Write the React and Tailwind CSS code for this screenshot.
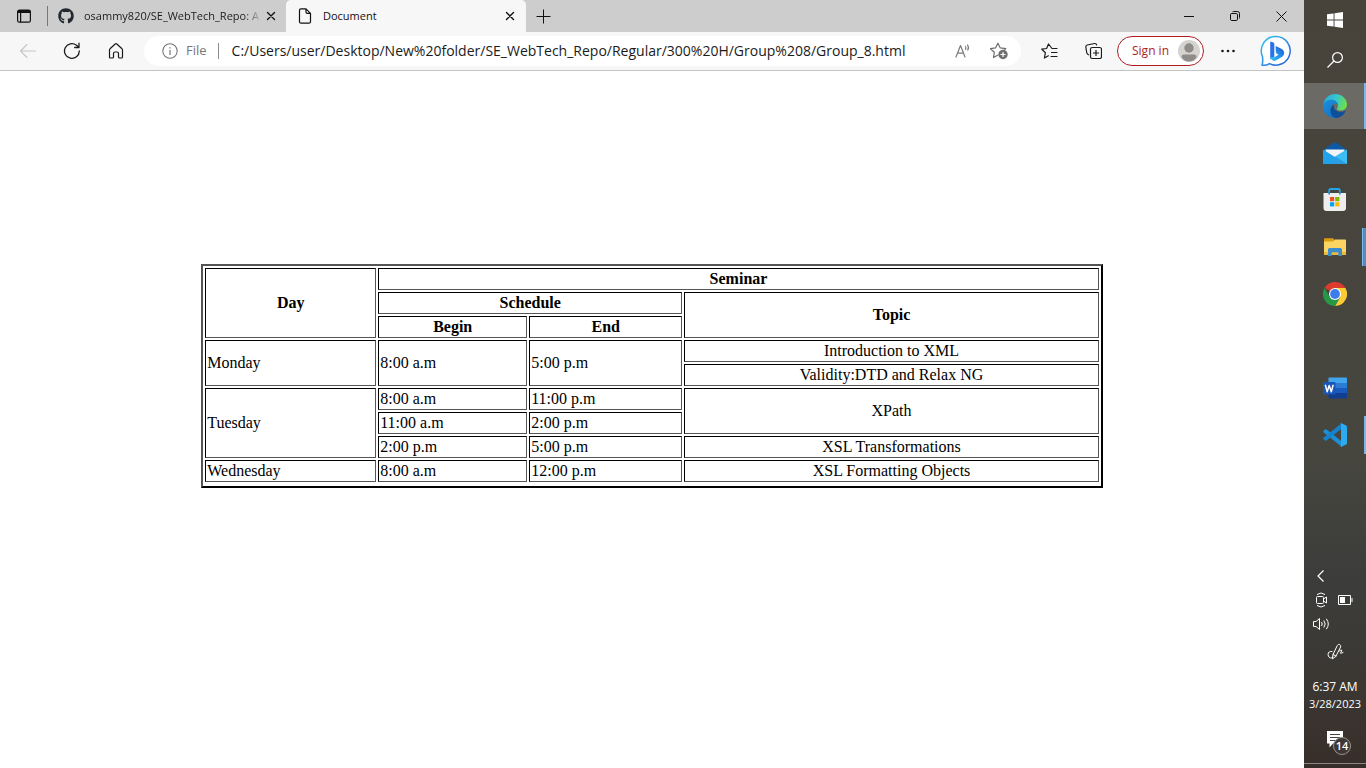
import React from "react";
import { FaGithub } from "react-icons/fa";

const UI = "font-['Open_Sans','Noto_Sans',sans-serif]";

function Svg({ w = 24, h = 24, children, ...rest }) {
  return (
    <svg width={w} height={h} viewBox={`0 0 ${w} ${h}`} fill="none" aria-hidden="true" className="shrink-0" {...rest}>
      {children}
    </svg>
  );
}

const line = { stroke: "currentColor", strokeLinecap: "round", strokeLinejoin: "round" };

function CloseIcon() {
  return (
    <Svg w={10} h={10}>
      <path {...line} strokeWidth="1.4" d="M1.5 1.5l7 7M8.5 1.5l-7 7" />
    </Svg>
  );
}

function TabBar() {
  return (
    <header className="flex h-8 bg-[#cdcdcd] text-[#111]">
      <button aria-label="Tab actions" className="flex w-[47px] items-center justify-center">
        <Svg w={16} h={16}>
          <rect x="1.6" y="2.2" width="12.8" height="12" rx="1.8" {...line} strokeWidth="1.2" />
          <path d="M1.5 5V3.5Q1.500 2 3 2h10q1.500 0 1.500 1.500V5z" fill="currentColor" />
          <path {...line} strokeWidth="1.2" d="M4.600 5v9" />
        </Svg>
      </button>
      <div className="my-1.5 w-px bg-[#777]" />
      <div className="flex w-[238px] items-center pl-2.5 pr-2.5">
        <FaGithub className="size-4 shrink-0 text-[#24292f]" />
        <span className="ml-2.5 min-w-0 flex-1 overflow-hidden whitespace-nowrap bg-gradient-to-r from-[#1b1b1b] from-90% to-transparent bg-clip-text text-[11px] text-transparent">
          osammy820/SE_WebTech_Repo: A
        </span>
        <button aria-label="Close osammy820 tab" className="ml-1">
          <CloseIcon />
        </button>
      </div>
      <div className="flex w-[240px] items-center rounded-t-[5px] bg-[#f7f7f7] pl-3 pr-[11px]">
        <Svg w={14} h={16}>
          <path {...line} strokeWidth="1.2" d="M8 .8H3Q1.500 .8 1.500 2.300v11.400q0 1.500 1.500 1.500h8q1.500 0 1.500-1.500V5.300zV4q0 1.300 1.300 1.300h3.200" />
        </Svg>
        <span className="ml-[11px] flex-1 text-[11px]">Document</span>
        <button aria-label="Close Document tab">
          <CloseIcon />
        </button>
      </div>
      <button aria-label="New tab" className="ml-2.5 flex items-center">
        <Svg w={15} h={15}>
          <path stroke="currentColor" d="M7.500 .5v14M.5 7.500h14" />
        </Svg>
      </button>
      <div className="ml-auto flex">
        <button aria-label="Minimize" className="flex w-[46px] items-center justify-center">
          <Svg w={10} h={10}>
            <path stroke="currentColor" d="M0 5.500h10" />
          </Svg>
        </button>
        <button aria-label="Restore" className="flex w-[46px] items-center justify-center">
          <Svg w={10} h={10}>
            <rect x=".5" y="2.500" width="7" height="7" rx="1.300" stroke="currentColor" />
            <path stroke="currentColor" d="M2.500 .8Q2.800 .5 3.500 .5H7.500Q9.500 .5 9.500 2.500V6.500Q9.500 7.200 9.200 7.500" />
          </Svg>
        </button>
        <button aria-label="Close window" className="flex w-[46px] items-center justify-center">
          <Svg w={11} h={11}>
            <path stroke="currentColor" d="M.5 .5l10 10M10.500 .5l-10 10" />
          </Svg>
        </button>
      </div>
    </header>
  );
}

function BingLogo() {
  return (
    <Svg w={32} h={32}>
      <defs>
        <linearGradient id="bingRing" x1="0" y1="0" x2="1" y2="1">
          <stop offset="0" stopColor="#35c8ee" />
          <stop offset="1" stopColor="#2456d8" />
        </linearGradient>
        <linearGradient id="bingLetter" x1="1" y1="0" x2="0" y2="1">
          <stop offset="0" stopColor="#1b50d0" />
          <stop offset="0.500" stopColor="#2592ec" />
          <stop offset="1" stopColor="#3ac6f2" />
        </linearGradient>
      </defs>
      <path d="M16 1.500A14.300 14.300 0 1 1 9.500 28.600Q7 30.500 2 30.300Q3.200 27 2.500 21.500A14.300 14.300 0 0 1 16 1.500z" fill="#fff" stroke="url(#bingRing)" strokeWidth="1.500" strokeLinejoin="round" />
      <path d="M10.200 6.500l3.200 1.100q.9 .4 .9 1.400v13l-4.100 2z" fill="#2a72ea" />
      <path d="M15.500 11.500q.3-.6 1.300-.1l5 2.600q2.400 1.300 2.400 4 0 2.300-2 3.700l-6.400 3.800q-1.500 .8-3 .1-2.600-1.300-2.600-3.600l4.100 .2 4.200-2.500-1.800-1.200q-.6-.5-.8-1.200z" fill="url(#bingLetter)" />
    </Svg>
  );
}

function Toolbar() {
  return (
    <div className="flex h-[39px] items-center border-b border-[#c4c4c4] bg-[#f7f7f7] pl-[18px] pr-3 text-[#1b1b1b]">
      <button aria-label="Back" disabled className="flex w-5 justify-center text-[#c6c6c6]">
        <Svg w={18} h={18}>
          <path {...line} strokeWidth="1.1" d="M16.500 9H1.500M8 2.500L1.500 9 8 15.500" />
        </Svg>
      </button>
      <button aria-label="Refresh" className="ml-6 flex w-5 justify-center">
        <Svg w={18} h={18}>
          <path {...line} strokeWidth="1.300" d="M16.300 9A7.400 7.400 0 1 1 13.500 3.200L15.800 5.300M16 1.200v4.300h-4.300" />
        </Svg>
      </button>
      <button aria-label="Home" className="ml-6 flex w-5 justify-center">
        <Svg w={18} h={18}>
          <path {...line} strokeWidth="1.200" d="M2.500 8Q2.500 7.300 3 6.800L8.200 2q.8-.7 1.600 0L15 6.800q.5.5.5 1.200v7q0 1-1 1h-2q-1 0-1-1v-3.500q0-1.500-1.500-1.500H8Q6.500 10 6.500 11.500V15q0 1-1 1h-2q-1 0-1-1z" />
        </Svg>
      </button>
      <div className="ml-[18px] flex h-[30px] min-w-0 flex-1 items-center rounded-full bg-white pl-[18px] pr-3">
        <Svg w={16} h={16} className="shrink-0 text-[#767676]">
          <circle cx="8" cy="8" r="7.200" stroke="currentColor" strokeWidth="1.100" />
          <path stroke="currentColor" strokeWidth="1.200" d="M8 7v5M8 4.200v1.400" />
        </Svg>
        <span className="ml-2 text-[13px] text-[#767676]">File</span>
        <div className="ml-[11px] h-4 w-px bg-[#8a8a8a]" />
        <input
          aria-label="Address"
          readOnly
          value="C:/Users/user/Desktop/New%20folder/SE_WebTech_Repo/Regular/300%20H/Group%208/Group_8.html"
          className="ml-[13px] min-w-0 flex-1 bg-transparent text-sm text-[#1b1b1b] outline-none"
        />
        <button aria-label="Read aloud" className="ml-2 text-[#7b7b7b]">
          <Svg w={18} h={18}>
            <path {...line} strokeWidth="1.200" d="M1 15L5.500 3.500 10 15M2.700 11.200h5.700M10.500 4.500q1 1.300 0 2.800M12.500 3q1.800 2.300 .3 5" />
          </Svg>
        </button>
        <button aria-label="Add to favorites" className="ml-4 text-[#6e6e6e]">
          <Svg w={20} h={20}>
            <path {...line} strokeWidth="1.200" d="M8.500 14.200L4.500 16.500l.8-5.200L1.500 7.700l5-.8L8.900 2.200l2.400 4.700 5.500 .8-2 2" />
            <circle cx="14" cy="13.500" r="4.700" fill="currentColor" />
            <path stroke="#fff" strokeWidth="1.200" d="M14 11v5M11.500 13.500h5" />
          </Svg>
        </button>
      </div>
      <button aria-label="Favorites" className="ml-5 flex w-4">
        <Svg w={17} h={18}>
          <path {...line} strokeWidth="1.200" d="M16 6.500h-5L7.500 2 5.600 6.500 .8 7.200l3.600 3.500-1 5.300 4-2.200M10.500 10.500H16M10 14.500h6" />
        </Svg>
      </button>
      <button aria-label="Collections" className="ml-7 flex w-4">
        <Svg w={17} h={18}>
          <path {...line} strokeWidth="1.200" d="M3.500 12.700Q2 12.200 1.700 10.500L.8 5Q.7 3.400 2.200 3L9.500 1.500q1.700-.2 2.200 1.500" />
          <rect x="5.500" y="5.500" width="11" height="11" rx="1.800" {...line} strokeWidth="1.200" />
          <path stroke="currentColor" strokeWidth="1.200" d="M11 8v6M8 11h6" />
        </Svg>
      </button>
      <button className="ml-4 flex h-[30px] w-[87px] items-center justify-between rounded-full border border-[#b01e22] bg-white pl-3.5 pr-[3px] text-xs text-[#b01e22]">
        Sign in
        <Svg w={22} h={22}>
          <circle cx="11" cy="11" r="11" fill="#d5d3d1" />
          <circle cx="11" cy="8" r="4.700" fill="#8e8b89" />
          <path d="M3.500 17q0-2.500 2.500-2.500h10q2.500 0 2.500 2.500-2.500 4.500-7.500 4.500T3.500 17z" fill="#8e8b89" />
        </Svg>
      </button>
      <button aria-label="Settings and more" className="ml-4 flex w-4 justify-center">
        <Svg w={16} h={4}>
          <circle cx="2.500" cy="2" r="1.300" fill="currentColor" />
          <circle cx="8" cy="2" r="1.300" fill="currentColor" />
          <circle cx="13.500" cy="2" r="1.300" fill="currentColor" />
        </Svg>
      </button>
      <button aria-label="Bing" className="ml-6">
        <BingLogo />
      </button>
    </div>
  );
}

const cell = "border border-b-[#555] border-l-black border-r-[#555] border-t-black p-px";

function Schedule() {
  return (
    <table className="mx-auto w-[70%] table-fixed border-separate border-spacing-0.5 border-2 border-b-black border-l-[#555] border-r-black border-t-[#555] pb-0.5 text-left text-base/[18px]">
      <colgroup>
        <col className="w-[171px]" />
        <col className="w-[149px]" />
        <col className="w-[153px]" />
        <col />
      </colgroup>
      <thead className="text-center">
        <tr>
          <th rowSpan={3} className={cell}>Day</th>
          <th colSpan={3} className={cell}>Seminar</th>
        </tr>
        <tr>
          <th colSpan={2} className={cell}>Schedule</th>
          <th rowSpan={2} className={cell}>Topic</th>
        </tr>
        <tr>
          <th className={cell}>Begin</th>
          <th className={cell}>End</th>
        </tr>
      </thead>
      <tbody>
        <tr>
          <td rowSpan={2} className={cell}>Monday</td>
          <td rowSpan={2} className={cell}>8:00 a.m</td>
          <td rowSpan={2} className={cell}>5:00 p.m</td>
          <td className={`${cell} text-center`}>Introduction to XML</td>
        </tr>
        <tr>
          <td className={`${cell} text-center`}>Validity:DTD and Relax NG</td>
        </tr>
        <tr>
          <td rowSpan={3} className={cell}>Tuesday</td>
          <td className={cell}>8:00 a.m</td>
          <td className={cell}>11:00 p.m</td>
          <td rowSpan={2} className={`${cell} text-center`}>XPath</td>
        </tr>
        <tr>
          <td className={cell}>11:00 a.m</td>
          <td className={cell}>2:00 p.m</td>
        </tr>
        <tr>
          <td className={cell}>2:00 p.m</td>
          <td className={cell}>5:00 p.m</td>
          <td className={`${cell} text-center`}>XSL Transformations</td>
        </tr>
        <tr>
          <td className={cell}>Wednesday</td>
          <td className={cell}>8:00 a.m</td>
          <td className={cell}>12:00 p.m</td>
          <td className={`${cell} text-center`}>XSL Formatting Objects</td>
        </tr>
      </tbody>
    </table>
  );
}

function EdgeLogo() {
  return (
    <Svg w={24} h={24}>
      <defs>
        <linearGradient id="edgeTop" x1="0" y1="0.200" x2="1" y2="0.500">
          <stop offset="0" stopColor="#2aa9e0" />
          <stop offset="0.500" stopColor="#35c5cf" />
          <stop offset="1" stopColor="#6be04b" />
        </linearGradient>
        <linearGradient id="edgeLeft" x1="0" y1="0" x2="0.500" y2="1">
          <stop offset="0" stopColor="#1c8fd8" />
          <stop offset="1" stopColor="#1276cc" />
        </linearGradient>
      </defs>
      <path d="M.3 10.500C1.200 4.200 6 0 12 0c7 0 12 5 12 10.500 0 3.800-2.900 6-6 6-2.500 0-4.200-.6-4.200-1.500 0-.6 1.200-1.200 1.200-3.200C15 9 12.500 6.800 9 6.800 4.500 6.800 1 9 .3 10.500z" fill="url(#edgeTop)" />
      <path d="M0 12C.3 8.500 4 5.800 8.500 5.800c4 0 6.500 2.500 6.500 5.500-1-1.300-3-2-4.500-1-3.500 2-3.700 7.500-.5 10.800 1.500 1.500 3 2.300 4.500 2.600A12 12 0 0 1 0 12z" fill="url(#edgeLeft)" />
      <path d="M11 10.500c-.8 2.500 .3 5.500 3.200 6.700 2.400 1 5.300 .8 7.500-.3 .6-.3 1 .2 .7 .8C20.500 21.500 16.500 24 12.800 24 7.500 23 5 14 11 10.500z" fill="#0f4f9a" />
    </Svg>
  );
}

function MailLogo() {
  return (
    <Svg w={24} h={24}>
      <path d="M0 9L12 1l12 8v3H0z" fill="#0a5aa8" />
      <path d="M2.500 8.500h19v3L12 17l-9.500-5.500z" fill="#f1f3f5" />
      <path d="M0 8.500L12 16l12-7.500V23H0z" fill="#22a2ea" />
      <path d="M24 8.500V23L12 15.500z" fill="#3cbdf5" />
      <path d="M12 15.500L24 23H8z" fill="#2b9fe4" />
    </Svg>
  );
}

function StoreLogo() {
  return (
    <Svg w={24} h={24}>
      <path d="M6.200 6V2.500Q6.200 1 7.700 1h7.600q1.500 0 1.500 1.500V6" stroke="#22a5ea" strokeWidth="1.800" />
      <path d="M.5 5h22.500v15q0 3-3 3H3.500q-3 0-3-3z" fill="#eeeeef" />
      <path d="M6.200 6.500V4M16.800 6.500V4" stroke="#1686cf" strokeWidth="1.600" />
      <path d="M7 9h4.200v4.200H7z" fill="#f04e23" />
      <path d="M12.200 9h4.200v4.200h-4.200z" fill="#7cb900" />
      <path d="M7 14.200h4.200v4.200H7z" fill="#00a3ee" />
      <path d="M12.200 14.200h4.200v4.200h-4.200z" fill="#fdb900" />
    </Svg>
  );
}

function FolderLogo() {
  return (
    <Svg w={24} h={24}>
      <path d="M1 4q0-.8 .8-.8h8.400L11.500 5v2H1z" fill="#dd9b0e" />
      <path d="M1 6.500h9L12 4.500h10q1 0 1 1V20H1z" fill="#fcd462" />
      <path d="M1 17h22v3H1z" fill="#edb93c" />
      <path d="M5 21v-6.500q0-1.500 1.500-1.500h11q1.500 0 1.500 1.500V21h-3.700v-3.700H8.700V21z" fill="#3c8dcc" />
    </Svg>
  );
}

function ChromeLogo() {
  return (
    <Svg w={24} h={24}>
      <path d="M12 12L1.600 6A12 12 0 0 1 22.400 6z" fill="#dc3b2e" />
      <path d="M12 12V6h10.400A12 12 0 0 1 12 24l5.200-9z" fill="#fbcc34" />
      <path d="M12 12l5.200 3L12 24A12 12 0 0 1 1.600 6l5.200 9z" fill="#279847" />
      <circle cx="12" cy="12" r="6" fill="#fff" />
      <circle cx="12" cy="12" r="4.900" fill="#3b7ded" />
    </Svg>
  );
}

function WordLogo() {
  return (
    <Svg w={24} h={22}>
      <path d="M5.500 1Q5.500 .5 6 .5h17q1 0 1 1V6H5.500z" fill="#41a5ee" />
      <path d="M5.500 6H24v5H5.500z" fill="#2b7cd3" />
      <path d="M5.500 11H24v5H5.500z" fill="#185abd" />
      <path d="M5.500 16H24v4.500q0 1-1 1H6.500q-1 0-1-1z" fill="#103f91" />
      <rect x="0" y="5" width="12.500" height="12.500" rx="1" fill="#1a56b8" />
      <path d="M2.300 7.800l1.900 7 2-6.300 2.100 6.300 1.900-7" stroke="#fff" strokeWidth="1.500" strokeLinejoin="round" />
    </Svg>
  );
}

function CodeLogo() {
  return (
    <Svg w={24} h={24}>
      <path d="M.4 7.900L2 6.500q.8-.5 1.500 0L18 17.700V23.300L.5 9.200q-.6-.7-.1-1.300z" fill="#1c8fd9" />
      <path d="M.4 16.100L2 17.500q.8 .5 1.500 0L18 6.300V.7L.5 14.800q-.6 .7-.1 1.300z" fill="#1482cc" />
      <path d="M17 .3q.7-.5 1.500-.1l4.600 2.200q.9 .5 .9 1.500v16.200q0 1-.9 1.500l-4.600 2.200q-.8 .4-1.500-.1 1 .2 1-1V1.300q0-1.200-1-1z" fill="#2cabf1" />
    </Svg>
  );
}

function TaskButton({ label, active, strip, children }) {
  return (
    <button
      aria-label={label}
      className={`relative flex h-[46px] w-full items-center justify-center ${active ? "bg-[#6b6a64]" : ""}`}
    >
      {children}
      {strip && <span className={`absolute right-0 ${strip}`} />}
    </button>
  );
}

function Taskbar() {
  return (
    <aside className="flex w-[62px] shrink-0 flex-col bg-[linear-gradient(to_bottom,#47433a_0%,#46463f_60%,#3c3d3b_75%,#3b3834_88%,#382e29_100%)] text-white">
      <button aria-label="Start" className="flex h-10 shrink-0 items-center justify-center">
        <Svg w={16} h={16}>
          <path fill="#fff" d="M0 2.300L6.600 1.400V7.500H0zM7.500 1.300L16 0v7.500H7.500zM0 8.500h6.600v6.100L0 13.700zM7.500 8.500H16V16l-8.500-1.200z" />
        </Svg>
      </button>
      <button aria-label="Search" className="mb-[3px] flex h-10 shrink-0 items-center justify-center">
        <Svg w={16} h={16}>
          <circle cx="10.500" cy="5.500" r="4.900" stroke="#fff" strokeWidth="1.200" />
          <path stroke="#fff" strokeWidth="1.300" d="M7 9L.5 15.500" />
        </Svg>
      </button>
      <nav aria-label="Pinned apps" className="flex flex-col gap-px">
        <TaskButton label="Microsoft Edge" active strip="inset-y-0 w-0.5 bg-[#76b9ed]"><EdgeLogo /></TaskButton>
        <TaskButton label="Mail"><MailLogo /></TaskButton>
        <TaskButton label="Microsoft Store"><StoreLogo /></TaskButton>
        <TaskButton label="File Explorer" strip="inset-y-1 w-1 border-l border-[#76b9ed] bg-[#5b8bb5]"><FolderLogo /></TaskButton>
        <TaskButton label="Google Chrome"><ChromeLogo /></TaskButton>
        <div className="h-[46px]" />
        <TaskButton label="Word"><WordLogo /></TaskButton>
        <TaskButton label="Visual Studio Code" strip="inset-y-1 w-0.5 bg-[#76b9ed]"><CodeLogo /></TaskButton>
      </nav>
      <div className="mt-auto flex flex-col">
        <button aria-label="Show hidden icons" className="flex h-6 items-center pl-[13px]">
          <Svg w={8} h={12}>
            <path stroke="#fff" strokeWidth="1.200" d="M6.500 .5L1 6l5.500 5.500" />
          </Svg>
        </button>
        <div className="flex h-6 items-center gap-2.5 pl-[11px]">
          <button aria-label="Meet now">
            <Svg w={13} h={16}>
              <rect x="1.500" y="4.500" width="7" height="7" rx="1" stroke="#fff" />
              <path stroke="#fff" d="M8.500 7l3-2v6l-3-2M2 2.500Q6 -.5 10 2.500M2 13.500q4 3 8 0" />
            </Svg>
          </button>
          <button aria-label="Battery">
            <Svg w={15} h={10}>
              <path stroke="#fff" d="M.5 .5h12v9H.5zM14 3v4" />
              <path fill="#fff" d="M2 2h5v6H2z" />
            </Svg>
          </button>
        </div>
        <button aria-label="Volume" className="flex h-6 items-center pl-[9px]">
          <Svg w={17} h={14}>
            <path stroke="#fff" d="M.5 4.500H3L6.500 1.500v11L3 9.500H.5zM8.500 5q1.500 2 0 4M10.800 3.500q2.800 3.500 0 7M13.300 1.800q4 5.200 0 10.400" />
          </Svg>
        </button>
        <button aria-label="Windows Ink Workspace" className="flex h-[30px] items-center justify-center">
          <Svg w={17} h={17}>
            <path {...line} stroke="#fff" d="M5 8.500H3.500Q1 8.800 1 11.500t2.500 3.500q1.500 0 2-.8" />
            <path {...line} stroke="#fff" d="M5.500 15.500L6 11.500 10.300 2.500q1-1.700 2.400-1t.9 2.500L9 13zM6 11.500L9 13" />
            <path {...line} stroke="#fff" d="M12 8.500q1.800-2.300 2.500-1.500t-.8 2.500 2.300 0" />
          </Svg>
        </button>
        <div className="flex flex-col items-center pt-3 text-xs/[17px]">
          <span>6:37 AM</span>
          <span className="text-[11px]/[17px]">3/28/2023</span>
        </div>
        <button aria-label="14 notifications" className="relative mt-[7px] flex h-10 items-center justify-center">
          <Svg w={16} h={17}>
            <path fill="#fff" d="M0 0h16v12.500H6L2.500 16.500v-4H0z" />
            <path stroke="#46403a" d="M3 3.500h10M3 6.500h10M3 9.500h7" />
          </Svg>
          <span className="absolute left-[29px] top-[18px] flex size-[18px] items-center justify-center rounded-full border border-[#98938f] bg-[#3d3835] text-[11px] font-semibold">
            14
          </span>
        </button>
        <div className="my-1 h-px bg-[#8a8581]" />
      </div>
    </aside>
  );
}

export default function App() {
  return (
    <div className={`flex min-h-screen bg-white ${UI}`}>
      <div className="flex min-w-0 flex-1 flex-col">
        <TabBar />
        <Toolbar />
        <main className="flex-1 px-2 pt-[193px] font-['Liberation_Serif','Times_New_Roman',serif] text-black">
          <Schedule />
        </main>
      </div>
      <Taskbar />
    </div>
  );
}
